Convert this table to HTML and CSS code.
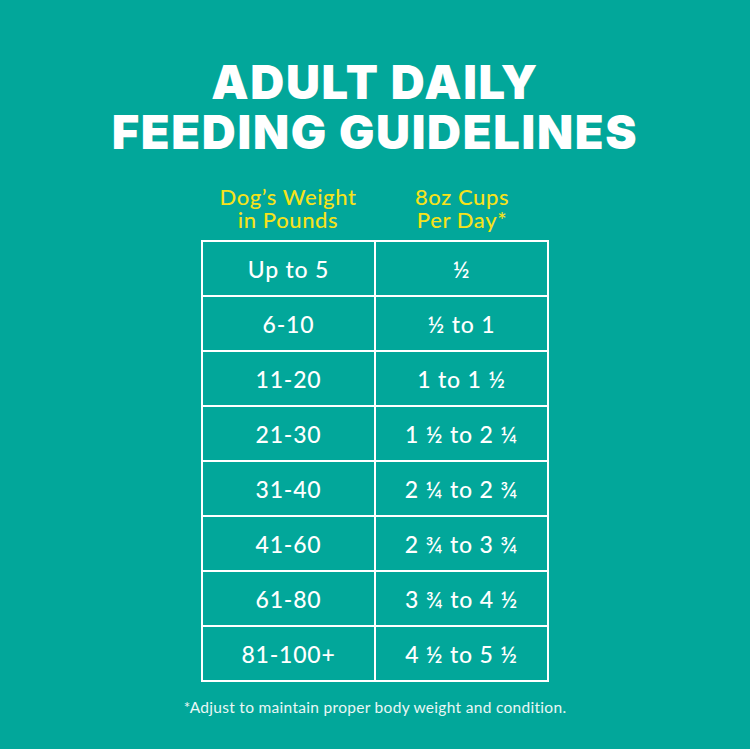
FILE: index.html
```html
<!DOCTYPE html>
<html>
<head>
<meta charset="utf-8">
<link rel="stylesheet" href="styles.css">
</head>
<body>
<main class="page">
  <h1 class="title">ADULT DAILY<br>FEEDING GUIDELINES</h1>
  <div class="heads">
    <div class="head">Dog’s Weight<br>in Pounds</div>
    <div class="head">8oz Cups<br>Per Day*</div>
  </div>
  <table class="grid">
    <tr><td>Up to 5</td><td>½</td></tr>
    <tr><td>6-10</td><td>½ to 1</td></tr>
    <tr><td>11-20</td><td>1 to 1 ½</td></tr>
    <tr><td>21-30</td><td>1 ½ to 2 ¼</td></tr>
    <tr><td>31-40</td><td>2 ¼ to 2 ¾</td></tr>
    <tr><td>41-60</td><td>2 ¾ to 3 ¾</td></tr>
    <tr><td>61-80</td><td>3 ¾ to 4 ½</td></tr>
    <tr><td>81-100+</td><td>4 ½ to 5 ½</td></tr>
  </table>
  <p class="note">*Adjust to maintain proper body weight and condition.</p>
</main>
</body>
</html>
```
FILE: styles.css
```css
html, body {
  margin: 0;
  padding: 0;
  background: #02a79a;
}
.page {
  width: 750px;
  height: 749px;
  display: flex;
  flex-direction: column;
  align-items: center;
  font-family: "Lato", "Inter", sans-serif;
  color: #ffffff;
}
.title {
  margin: 57px 0 0 0;
  font-family: "Inter", sans-serif;
  font-weight: 900;
  font-size: 47px;
  line-height: 50px;
  text-align: center;
  letter-spacing: 1.7px;
}
.heads {
  margin-top: 28px;
  display: flex;
  width: 348px;
}
.head {
  flex: 1;
  text-align: center;
  color: #f6e21a;
  font-size: 22px;
  line-height: 23px;
  font-weight: 500;
  letter-spacing: 0.6px;
}
.grid {
  margin-top: 9px;
  border-collapse: collapse;
  width: 348px;
}
.grid td {
  border: 2px solid #ffffff;
  width: 50%;
  height: 53px;
  padding: 0;
  text-align: center;
  font-size: 23px;
  font-weight: 500;
  letter-spacing: 0.8px;
}
.note {
  margin: 16px 0 0 0;
  font-size: 15.5px;
  line-height: 18px;
  letter-spacing: 0.3px;
  color: #eaf7f5;
}
```
